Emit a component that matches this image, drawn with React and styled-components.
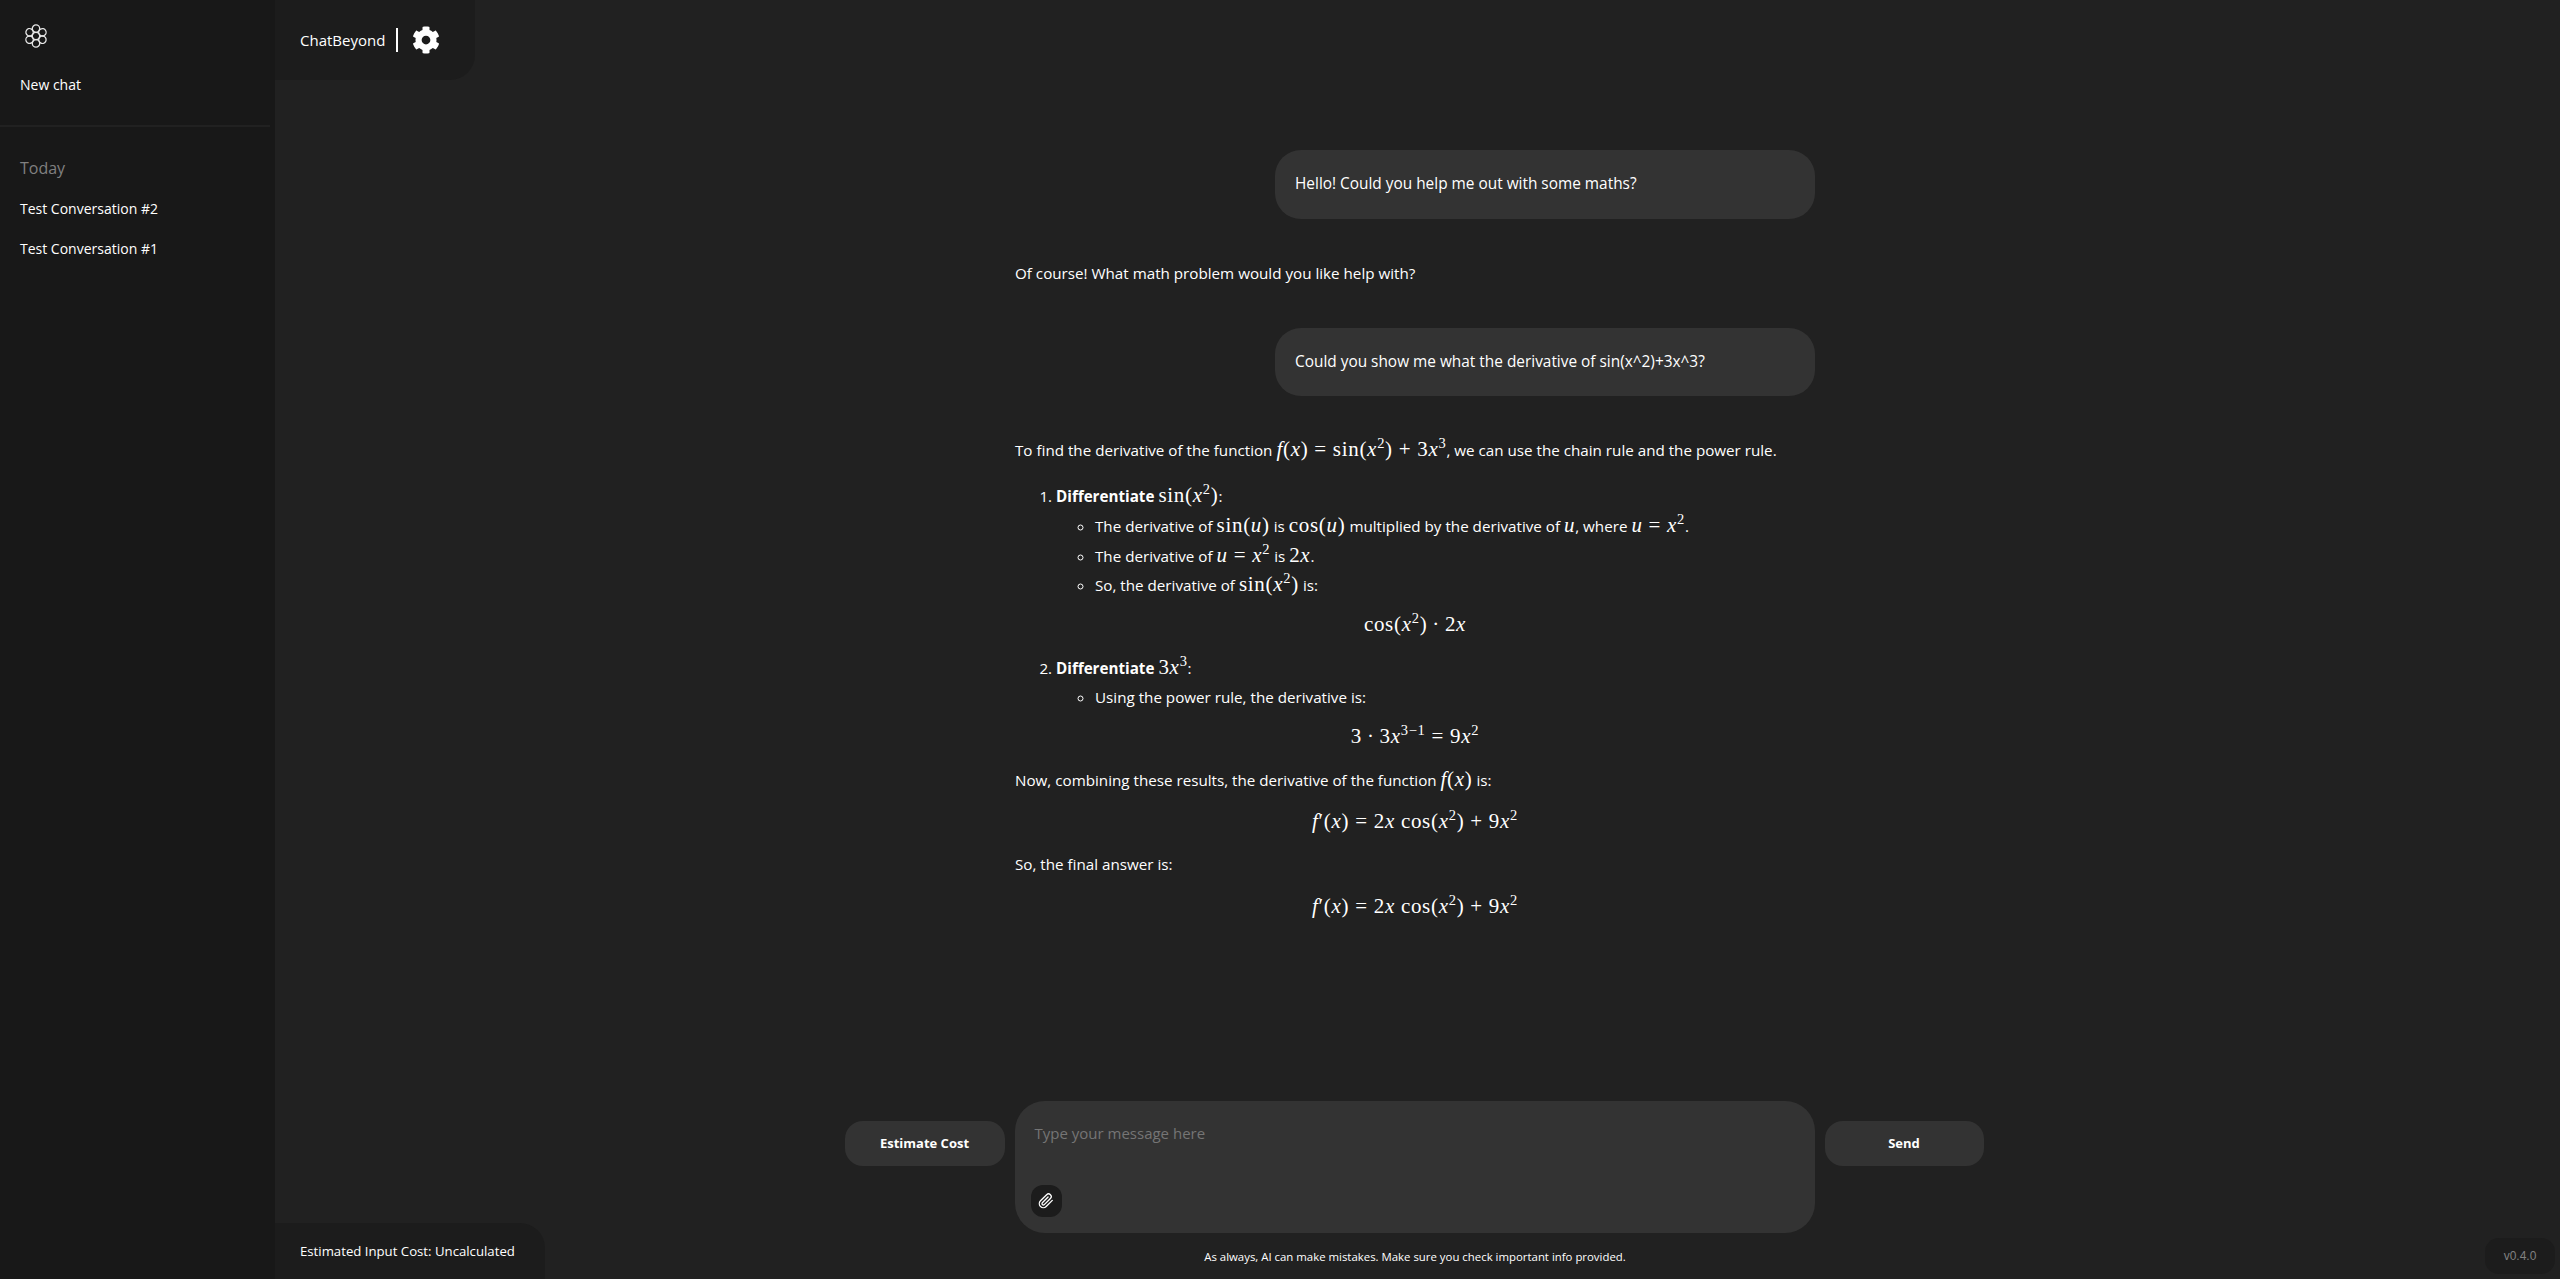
import React from "react";
import styled, { createGlobalStyle } from "styled-components";
import { FaCog } from "react-icons/fa";
import { FiPaperclip } from "react-icons/fi";

const Global = createGlobalStyle`
  * { box-sizing: border-box; }
  html, body { margin: 0; padding: 0; height: 100%; background: #212121; }
  body { font-family: "Open Sans", "Noto Sans", sans-serif; color: #fff; overflow: hidden; }
`;

const Shell = styled.div`
  display: flex;
  width: 2560px;
  height: 1279px;
  background: #212121;
  font-size: 15.2px;
`;
const Sidebar = styled.aside`
  flex: 0 0 275px;
  background: #181818;
  display: flex;
  flex-direction: column;
  padding-right: 5px;
  font-size: 14px;
`;
const SideTop = styled.div`
  display: flex;
  flex-direction: column;
  align-items: flex-start;
  height: 125px;
  padding: 24px 20px 0;
`;
const LogoWrap = styled.div`
  margin-left: 4px;
  height: 24px;
  line-height: 0;
`;
const NewChat = styled.div`
  margin-top: 25px;
  line-height: 24px;
`;
const Divider = styled.div`
  height: 2px;
  background: #212121;
`;
const History = styled.nav`
  display: flex;
  flex-direction: column;
  padding: 29px 20px 0;
`;
const DayLabel = styled.div`
  color: #808080;
  font-size: 16px;
  line-height: 24px;
  margin-bottom: 17px;
`;
const HistoryItem = styled.div`
  line-height: 24px;
  margin-bottom: 16px;
`;
const Main = styled.main`
  flex: 1;
  position: relative;
  display: flex;
  flex-direction: column;
  min-width: 0;
  padding-right: 5px;
`;
const HeaderTab = styled.header`
  align-self: flex-start;
  display: flex;
  align-items: center;
  height: 80px;
  width: 200px;
  padding-left: 25px;
  background: #1c1c1c;
  border-bottom-right-radius: 25px;
  font-size: 15px;
`;
const Brand = styled.span`
  line-height: 24px;
  padding-right: 11px;
`;
const HeaderRule = styled.span`
  width: 2px;
  height: 24px;
  background: #fff;
  margin-right: 14px;
`;
const Column = styled.section`
  flex: 1;
  width: 800px;
  margin: 0 auto;
  padding-top: 70px;
  display: flex;
  flex-direction: column;
  min-height: 0;
`;
const UserBubble = styled.div`
  align-self: flex-end;
  width: 540px;
  height: ${(p) => p.$h}px;
  display: flex;
  align-items: center;
  padding: 0 20px 1px;
  background: #333;
  border-radius: 26px;
  line-height: 24px;
  font-size: 15.4px;
`;
const Answer = styled.article`
  padding-top: ${(p) => p.$top}px;
  padding-bottom: ${(p) => p.$bottom}px;
`;
const Para = styled.p`
  margin: 0 0 ${(p) => p.$after || 0}px;
  line-height: 29px;
  height: 29px;
  white-space: nowrap;
`;
const OrderedList = styled.ol`
  margin: 0;
  padding: 0 0 0 41px;
`;
const Step = styled.li`
  line-height: 29px;
`;
const SubList = styled.ul`
  list-style: circle;
  margin: 0;
  padding: 0 0 0 39px;
`;
const SubItem = styled.li`
  line-height: 28.5px;
`;
const Display = styled.div`
  text-align: center;
  line-height: 29px;
  height: 29px;
  margin: ${(p) => p.$top}px 0 ${(p) => p.$bottom}px ${(p) => p.$inset || 0}px;
`;
const Math = styled.span`
  font-family: "Liberation Serif", "DejaVu Serif", serif;
  font-size: 21px;
  letter-spacing: 0.7px;
  font-weight: 400;
`;
const V = styled.i`
  font-style: italic;
`;
const Sup = styled.sup`
  font-size: 14.5px;
  line-height: 0;
  vertical-align: 8px;
`;
const Composer = styled.div`
  display: grid;
  grid-template-columns: 160px 800px 159px;
  column-gap: 10px;
  justify-content: center;
  align-items: start;
  transform: translateX(-1px);
`;
const SideButton = styled.button`
  margin-top: 20px;
  height: 45px;
  width: 100%;
  padding: 0 0 2px;
  border: 0;
  background: #333;
  color: #fff;
  border-radius: 18px;
  font: 700 13px "Open Sans", sans-serif;
`;
const InputBox = styled.div`
  height: 132px;
  background: #333;
  border-radius: 30px;
  padding: 20px 18px 16px 18px;
  display: flex;
  flex-direction: column;
  justify-content: space-between;
  font-size: 15px;
`;
const Placeholder = styled.div`
  color: #757575;
  line-height: 24px;
  padding-left: 2px;
`;
const Attach = styled.button`
  width: 31px;
  height: 32px;
  margin-left: -2px;
  border: 0;
  border-radius: 12px;
  background: #1c1c1c;
  color: #fff;
  display: flex;
  align-items: center;
  justify-content: center;
  padding: 0;
`;
const Disclaimer = styled.div`
  height: 46px;
  padding-top: 16px;
  text-align: center;
  font-size: 11.4px;
  line-height: 16px;
`;
const CostBadge = styled.div`
  position: absolute;
  left: 0;
  bottom: 0;
  width: 270px;
  height: 56px;
  padding-left: 25px;
  display: flex;
  align-items: center;
  background: #1c1c1c;
  border-top-right-radius: 25px;
  font-size: 13.2px;
`;
const Version = styled.div`
  position: absolute;
  right: 5px;
  bottom: 5px;
  width: 70px;
  height: 36px;
  display: flex;
  align-items: center;
  justify-content: center;
  background: #1c1c1c;
  border-radius: 14px;
  color: #808080;
  font: 12px "Liberation Sans", sans-serif;
`;

const Logo = () => {
  const petals = [0, 60, 120, 180, 240, 300];
  return (
    <svg width="24" height="24" viewBox="0 0 24 24" fill="none" stroke="#e6e6e6" strokeWidth="1.3">
      <circle cx="12" cy="12" r="3.7" />
      {petals.map((a) => (
        <circle key={a} cx="12" cy="4.6" r="3.7" transform={`rotate(${a} 12 12)`} />
      ))}
    </svg>
  );
};

const FPrime = () => (
  <Math>
    <V>f</V>′(<V>x</V>) = 2<V>x</V> cos(<V>x</V><Sup>2</Sup>) + 9<V>x</V><Sup>2</Sup>
  </Math>
);

export default function App() {
  return (
    <Shell>
      <Global />
      <Sidebar>
        <SideTop>
          <LogoWrap><Logo /></LogoWrap>
          <NewChat>New chat</NewChat>
        </SideTop>
        <Divider />
        <History>
          <DayLabel>Today</DayLabel>
          <HistoryItem>Test Conversation #2</HistoryItem>
          <HistoryItem>Test Conversation #1</HistoryItem>
        </History>
      </Sidebar>
      <Main>
        <HeaderTab>
          <Brand>ChatBeyond</Brand>
          <HeaderRule />
          <FaCog size={28} color="#fff" />
        </HeaderTab>
        <Column>
          <UserBubble $h={69}>Hello! Could you help me out with some maths?</UserBubble>
          <Answer $top={40} $bottom={40}>
            <Para>Of course! What math problem would you like help with?</Para>
          </Answer>
          <UserBubble $h={68}>Could you show me what the derivative of sin(x^2)+3x^3?</UserBubble>
          <Answer $top={39} $bottom={0}>
            <Para $after={17}>
              To find the derivative of the function <Math><V>f</V>(<V>x</V>) = sin(<V>x</V><Sup>2</Sup>) + 3<V>x</V><Sup>3</Sup></Math>, we can use the chain rule and the power rule.
            </Para>
            <OrderedList>
              <Step>
                <strong>Differentiate</strong> <Math>sin(<V>x</V><Sup>2</Sup>)</Math>:
                <SubList>
                  <SubItem>The derivative of <Math>sin(<V>u</V>)</Math> is <Math>cos(<V>u</V>)</Math> multiplied by the derivative of <Math><V>u</V></Math>, where <Math><V>u</V> = <V>x</V><Sup>2</Sup></Math>.</SubItem>
                  <SubItem>The derivative of <Math><V>u</V> = <V>x</V><Sup>2</Sup></Math> is <Math>2<V>x</V></Math>.</SubItem>
                  <SubItem>
                    So, the derivative of <Math>sin(<V>x</V><Sup>2</Sup>)</Math> is:
                    <Display $top={10} $bottom={14} $inset={-80}><Math>cos(<V>x</V><Sup>2</Sup>){"\u2009·\u2009"}2<V>x</V></Math></Display>
                  </SubItem>
                </SubList>
              </Step>
              <Step>
                <strong>Differentiate</strong> <Math>3<V>x</V><Sup>3</Sup></Math>:
                <SubList>
                  <SubItem>
                    Using the power rule, the derivative is:
                    <Display $top={11} $bottom={14} $inset={-80}><Math>3{"\u2009·\u2009"}3<V>x</V><Sup>3−1</Sup> = 9<V>x</V><Sup>2</Sup></Math></Display>
                  </SubItem>
                </SubList>
              </Step>
            </OrderedList>
            <Para>Now, combining these results, the derivative of the function <Math><V>f</V>(<V>x</V>)</Math> is:</Para>
            <Display $top={13} $bottom={14}><FPrime /></Display>
            <Para>So, the final answer is:</Para>
            <Display $top={13} $bottom={0}><FPrime /></Display>
          </Answer>
        </Column>
        <Composer>
          <SideButton>Estimate Cost</SideButton>
          <InputBox>
            <Placeholder>Type your message here</Placeholder>
            <Attach><FiPaperclip size={16} /></Attach>
          </InputBox>
          <SideButton>Send</SideButton>
        </Composer>
        <Disclaimer>As always, AI can make mistakes. Make sure you check important info provided.</Disclaimer>
        <CostBadge>Estimated Input Cost: Uncalculated</CostBadge>
        <Version>v0.4.0</Version>
      </Main>
    </Shell>
  );
}
